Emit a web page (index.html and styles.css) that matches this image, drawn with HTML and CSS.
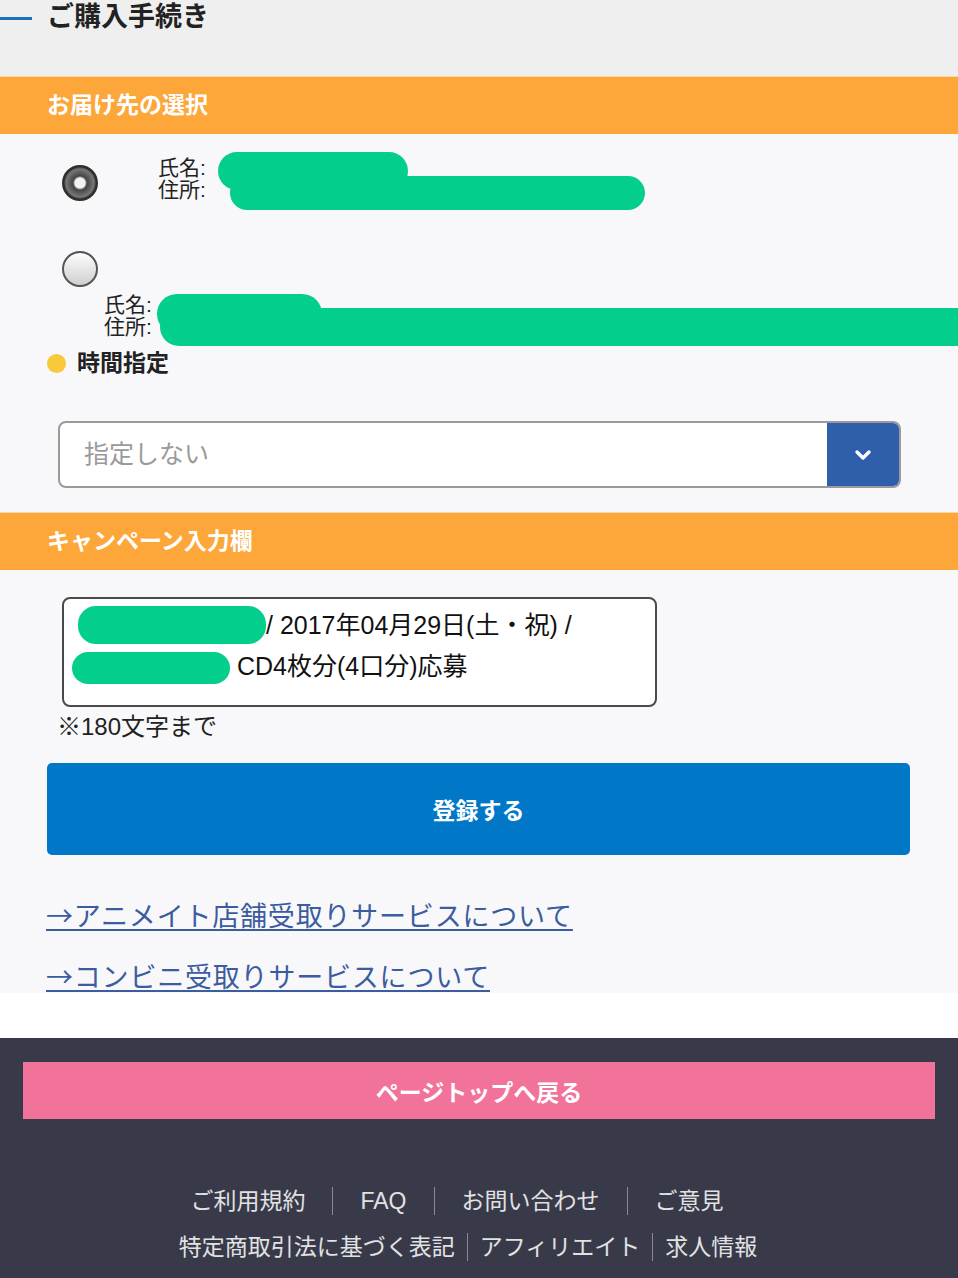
FILE: index.html
```html
<!DOCTYPE html>
<html lang="ja">
<head>
    <meta charset="UTF-8">
    <meta name="viewport" content="width=device-width, initial-scale=1.0">
    <title>ご購入手続き</title>
    <link rel="stylesheet" href="styles.css">
</head>
<body>
    <div class="page_head">
        <h1 class="page_tit">ご購入手続き</h1>
    </div>

    <h2 class="sec_bar">お届け先の選択</h2>
    <div class="addr_sec">
        <div class="addr_row">
            <span class="radio on"></span>
            <div class="addr addr1">
                <span class="mask m1"></span>
                <span class="mask m2"></span>
                氏名:<br>住所:
            </div>
        </div>
        <div class="addr_row row2">
            <span class="radio"></span>
        </div>
        <div class="addr addr2">
            <span class="mask m3"></span>
            <span class="mask m4"></span>
            氏名:<br>住所:
        </div>
        <p class="time_tit">時間指定</p>
        <div class="sel_box">
            <span class="sel_txt">指定しない</span>
            <span class="sel_btn">
                <svg width="20" height="14" viewBox="0 0 20 14"><polyline points="4,4 10,10 16,4" fill="none" stroke="#fff" stroke-width="3.4" stroke-linecap="round" stroke-linejoin="round"/></svg>
            </span>
        </div>
    </div>

    <h2 class="sec_bar">キャンペーン入力欄</h2>
    <div class="camp_sec">
        <div class="camp_box">
            <span class="blob b1"></span>/ 2017年04月29日(土・祝) /<br>
            <span class="blob b2"></span>CD4枚分(4口分)応募
        </div>
        <p class="note">※180文字まで</p>
        <button type="button" class="reg_btn">登録する</button>
        <a href="#" class="svc_link">→アニメイト店舗受取りサービスについて</a>
        <a href="#" class="svc_link">→コンビニ受取りサービスについて</a>
    </div>

    <div class="foot">
        <button type="button" class="top_btn">ページトップへ戻る</button>
        <ul class="foot_nav">
            <li>ご利用規約</li><li class="sep"></li><li>FAQ</li><li class="sep"></li><li>お問い合わせ</li><li class="sep"></li><li>ご意見</li>
        </ul>
        <ul class="foot_nav nav2">
            <li>特定商取引法に基づく表記</li><li class="sep"></li><li>アフィリエイト</li><li class="sep"></li><li>求人情報</li>
        </ul>
    </div>
</body>
</html>
```

FILE: styles.css
```css
body { margin:0; background:#fff; font-family:"Liberation Sans", "Noto Sans CJK JP", sans-serif; color:#222; }
h1, h2, p, ul { margin:0; padding:0; }

.page_head { height:76px; background:#efefef; display:flex; align-items:flex-start; }
.page_head::before { content:""; width:32px; height:3px; background:#1a6fbf; margin-top:17px; margin-right:15px; }
.page_tit { font-size:27px; line-height:34px; font-weight:bold; color:#222; }

.sec_bar { height:58px; line-height:57px; box-sizing:border-box; border-top:1px solid #fcd7a6; background:#fda63a; color:#fff; font-size:23px; font-weight:bold; padding-left:47px; }

.addr_sec { background:#f8f8fa; padding:23px 0 24px; overflow:hidden; }
.addr_row { display:flex; align-items:flex-start; padding-left:62px; }
.addr_row.row2 { margin-top:50px; }
.radio { width:36px; height:36px; margin-top:8px; border-radius:50%; box-sizing:border-box; border:2px solid #555; background:linear-gradient(#fdfdfd, #cfcfcf); flex-shrink:0; }
.addr_row.row2 .radio { margin-top:0; }
.radio.on { border-color:#2e2e2e; background:radial-gradient(circle, #f2f2f2 0 5px, #999 6px, #444 7px, #777 14px, #333 16px); }

.addr { position:relative; font-size:21px; line-height:22px; color:#222; }
.addr1 { margin-left:60px; }
.addr2 { margin:7px 0 0 104px; }
.mask { position:absolute; background:#04ce8c; border-radius:20px; }
.m1 { left:60px; top:-5px; width:190px; height:38px; }
.m2 { left:72px; top:19px; width:415px; height:34px; }
.m3 { left:53px; top:0; width:165px; height:40px; }
.m4 { left:56px; top:14px; width:820px; height:38px; }

.time_tit { display:flex; align-items:center; margin:12px 0 0 47px; font-size:23px; line-height:26px; font-weight:bold; color:#222; }
.time_tit::before { content:""; width:19px; height:19px; border-radius:50%; background:#f8c93a; margin-right:11px; }

.sel_box { display:flex; height:67px; box-sizing:border-box; margin:45px 57px 0 58px; border:2px solid #9a9a9a; border-radius:8px; background:#fff; overflow:hidden; }
.sel_txt { flex:1; padding-left:24px; font-size:25px; line-height:63px; color:#9a9a9a; }
.sel_btn { width:72px; background:#2f5eab; display:flex; align-items:center; justify-content:center; }

.camp_sec { background:#f8f8fa; padding:27px 0 0; }
.camp_box { width:595px; height:110px; box-sizing:border-box; margin-left:62px; padding:6px 14px; border:2px solid #4a4a4a; border-radius:8px; background:#fff; font-size:25px; line-height:41px; color:#111; }
.blob { display:inline-block; vertical-align:middle; background:#04ce8c; border-radius:18px; }
.b1 { width:188px; height:38px; margin-top:-4px; }
.b2 { width:158px; height:32px; margin-left:-6px; margin-right:7px; }
.note { margin:7px 0 0 57px; font-size:24px; line-height:26px; color:#222; }

.reg_btn { display:block; width:863px; height:92px; margin:23px 0 0 47px; border:none; border-radius:5px; background:#0077c7; color:#fff; font-family:inherit; font-size:23px; font-weight:bold; }

.svc_link { display:block; width:max-content; margin:42px 0 0 46px; font-family:"Noto Sans CJK JP", sans-serif; font-size:27px; letter-spacing:0.8px; line-height:36px; color:#3b5c9e; text-decoration:underline; text-underline-offset:3px; }
.svc_link + .svc_link { margin-top:26px; line-height:34px; }

.foot { margin-top:45px; background:#383a4a; padding:24px 0 20px; }
.top_btn { display:block; width:912px; height:57px; margin:0 23px; border:none; background:#f27399; color:#fff; font-family:inherit; font-size:23px; font-weight:bold; }
.foot_nav { list-style:none; display:flex; justify-content:center; align-items:center; margin-top:67px; padding-right:44px; font-size:23px; line-height:30px; color:#e2e2e2; }
.foot_nav .sep { width:1px; height:28px; background:#8a8a96; margin:0 27px; }
.foot_nav.nav2 { margin-top:16px; padding-right:22px; }
.nav2 .sep { margin:0 12px; }
```
